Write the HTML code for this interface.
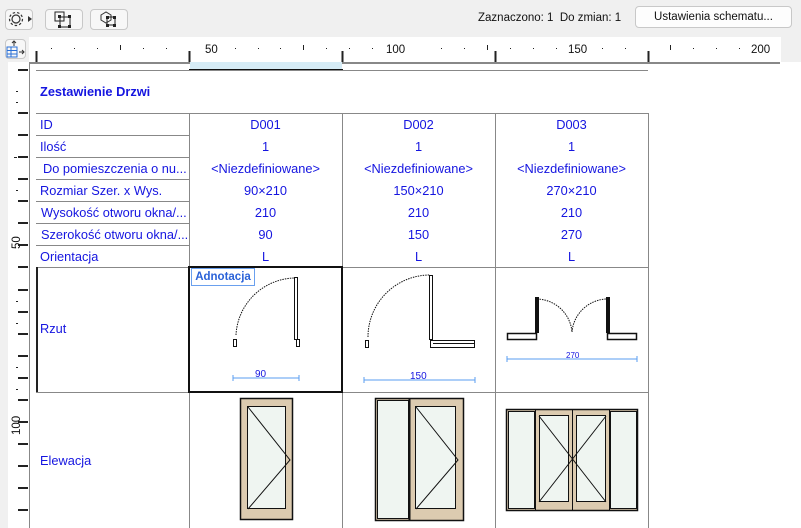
<!DOCTYPE html>
<html><head><meta charset="utf-8"><style>
body{margin:0;width:801px;height:528px;overflow:hidden;background:#f0f0f0;font-family:"Liberation Sans",sans-serif;position:relative}
.btn{position:absolute;top:9px;height:21px;border:1px solid #c8c8c8;border-radius:4px;background:#f7f7f7;box-sizing:border-box}
.t{position:absolute;color:#1515e0;font-size:12.8px;white-space:nowrap}
.c{text-align:center;width:153px}
.hl{position:absolute;background:#888;height:1px}
.vl{position:absolute;background:#888;width:1px}
</style></head><body>
<div class="btn" style="left:5px;width:28px"></div>
<svg style="position:absolute;left:7px;top:11px" width="26" height="18"><circle cx="9" cy="8" r="4" fill="none" stroke="#333" stroke-width="1.2"/><circle cx="9" cy="8" r="6.5" fill="none" stroke="#333" stroke-width="1.2" stroke-dasharray="2.5 2"/><path d="M21 5l4 3-4 3z" fill="#333"/></svg>
<div class="btn" style="left:45px;width:38px"></div>
<svg style="position:absolute;left:54px;top:11px" width="22" height="18"><rect x="1" y="1" width="9" height="9" fill="none" stroke="#222"/><rect x="6" y="6" width="10" height="10" fill="none" stroke="#222"/><rect x="4" y="4" width="3" height="3" fill="#222"/><rect x="14" y="14" width="3" height="3" fill="#222"/><rect x="14" y="4" width="3" height="3" fill="#222"/><rect x="4" y="14" width="3" height="3" fill="#222"/></svg>
<div class="btn" style="left:90px;width:38px"></div>
<svg style="position:absolute;left:99px;top:11px" width="22" height="18"><path d="M2 4l5-3 5 3v5l-5 3-5-3z" fill="none" stroke="#333"/><rect x="8" y="6" width="8" height="8" fill="none" stroke="#222"/><rect x="7" y="5" width="3" height="3" fill="#222"/><rect x="14" y="13" width="3" height="3" fill="#222"/><rect x="14" y="5" width="3" height="3" fill="#222"/><rect x="7" y="13" width="3" height="3" fill="#222"/></svg>
<div style="position:absolute;left:478px;top:12px;font-size:11.5px;color:#111">Zaznaczono: 1&nbsp; Do zmian: 1</div>
<div class="btn" style="left:635px;top:6px;width:157px;height:22px;background:#fdfdfd;font-size:11.5px;text-align:center;line-height:20px;color:#111">Ustawienia schematu...</div>
<div class="btn" style="left:5px;top:39px;width:21px;height:20px"></div>
<svg style="position:absolute;left:6px;top:40px" width="20" height="18"><path d="M8 1v5M6 3l2-2 2 2" stroke="#333" fill="none"/><rect x="1" y="7" width="10" height="10" fill="none" stroke="#2a6fd6"/><path d="M1 10.5h10M1 14h10M5 7v10" stroke="#2a6fd6"/><path d="M13 12h5M16 10l2 2-2 2" stroke="#333" fill="none"/></svg>
<div style="position:absolute;left:29px;top:37px;width:752px;height:25px;background:#fff"></div>
<svg style="position:absolute;left:0;top:37px" width="801" height="26" font-family="Liberation Sans" font-size="11.5" fill="#111">
<g stroke="#222" stroke-width="1">
<path d="M36.5 14v11M189.5 14v11M342.5 14v11M495.5 14v11M648.5 14v11" stroke-width="2"/>
<path d="M120.5 8v5M303.5 8v5M487.5 8v5M670.5 8v5"/>
</g>
<g fill="#222">
<rect x="51" y="11" width="1" height="1"/><rect x="74" y="11" width="1" height="1"/><rect x="97" y="11" width="1" height="1"/><rect x="143" y="11" width="1" height="1"/><rect x="166" y="11" width="1" height="1"/>
<rect x="235" y="11" width="1" height="1"/><rect x="258" y="11" width="1" height="1"/><rect x="280" y="11" width="1" height="1"/><rect x="326" y="11" width="1" height="1"/>
<rect x="349" y="11" width="1" height="1"/><rect x="372" y="11" width="1" height="1"/><rect x="441" y="11" width="1" height="1"/><rect x="464" y="11" width="1" height="1"/><rect x="510" y="11" width="1" height="1"/><rect x="533" y="11" width="1" height="1"/><rect x="556" y="11" width="1" height="1"/><rect x="602" y="11" width="1" height="1"/><rect x="625" y="11" width="1" height="1"/><rect x="693" y="11" width="1" height="1"/><rect x="716" y="11" width="1" height="1"/><rect x="739" y="11" width="1" height="1"/>
</g>
<text x="205" y="16">50</text><text x="386" y="16">100</text><text x="568" y="16">150</text><text x="751" y="16">200</text>
</svg>
<div style="position:absolute;left:8px;top:62px;width:21px;height:466px;background:#fff"></div>
<svg style="position:absolute;left:0;top:62px" width="30" height="466" font-family="Liberation Sans" font-size="11.5" fill="#111">
<g stroke="#222" stroke-width="2">
<path d="M18 8h10M18 51h10M18 73h10M18 95h10M18 117h10M18 139h10M18 161h10M18 183h10M18 205h10M18 228h10M18 250h10M18 272h10M18 294h10M18 316h10M18 338h10M18 360h10M18 382h10M18 404h10M18 426h10M18 448h10"/>
</g>
<g fill="#222"><rect x="16" y="29" width="2" height="1"/><rect x="16" y="40" width="2" height="1"/><rect x="14" y="95" width="3" height="1"/><rect x="16" y="128" width="2" height="1"/><rect x="16" y="239" width="2" height="1"/><rect x="16" y="261" width="2" height="1"/><rect x="16" y="305" width="2" height="1"/><rect x="16" y="327" width="2" height="1"/></g>
<text transform="translate(20,187) rotate(-90)">50</text>
<text transform="translate(20,373) rotate(-90)">100</text>
</svg>
<div style="position:absolute;left:29px;top:62px;width:751px;height:466px;background:#fff;border-left:1px solid #888;border-top:2px solid #888;box-sizing:border-box"></div>
<div style="position:absolute;left:780px;top:62px;width:21px;height:466px;background:#fff"></div>
<div style="position:absolute;left:190px;top:62px;width:152px;height:8px;background:#d6ecf6"></div>
<div style="position:absolute;left:189px;top:69px;width:154px;height:2px;background:#111"></div>
<div class="hl" style="left:36px;top:70px;width:612px"></div>
<div class="t" style="left:40px;top:84px;font-weight:bold;font-size:12.8px">Zestawienie Drzwi</div>
<div class="hl" style="left:36px;top:113px;width:612px"></div>
<div class="hl" style="left:36px;top:135px;width:153px"></div>
<div class="hl" style="left:36px;top:157px;width:153px"></div>
<div class="hl" style="left:36px;top:179px;width:153px"></div>
<div class="hl" style="left:36px;top:201px;width:153px"></div>
<div class="hl" style="left:36px;top:223px;width:153px"></div>
<div class="hl" style="left:36px;top:245px;width:153px"></div>
<div class="hl" style="left:36px;top:267px;width:612px"></div>
<div class="hl" style="left:36px;top:392px;width:612px"></div>
<div class="vl" style="left:189px;top:113px;height:415px"></div>
<div class="vl" style="left:342px;top:113px;height:415px"></div>
<div class="vl" style="left:495px;top:113px;height:415px"></div>
<div class="vl" style="left:648px;top:113px;height:415px"></div>
<div style="position:absolute;left:36px;top:267px;width:2px;height:125px;background:#222"></div>
<div style="position:absolute;left:188px;top:266px;width:155px;height:127px;border:2px solid #111;box-sizing:border-box"></div>
<div class="t" style="left:40px;top:117px">ID</div>
<div class="t" style="left:40px;top:139px">Ilość</div>
<div class="t" style="left:43px;top:161px">Do pomieszczenia o nu...</div>
<div class="t" style="left:40px;top:183px">Rozmiar Szer. x Wys.</div>
<div class="t" style="left:41px;top:205px">Wysokość otworu okna/...</div>
<div class="t" style="left:41px;top:227px">Szerokość otworu okna/...</div>
<div class="t" style="left:40px;top:249px">Orientacja</div>
<div class="t" style="left:40px;top:321px">Rzut</div>
<div class="t" style="left:40px;top:453px">Elewacja</div>
<div class="t c" style="left:189px;top:117px">D001</div><div class="t c" style="left:342px;top:117px">D002</div><div class="t c" style="left:495px;top:117px">D003</div>
<div class="t c" style="left:189px;top:139px">1</div><div class="t c" style="left:342px;top:139px">1</div><div class="t c" style="left:495px;top:139px">1</div>
<div class="t c" style="left:189px;top:161px">&lt;Niezdefiniowane&gt;</div><div class="t c" style="left:342px;top:161px">&lt;Niezdefiniowane&gt;</div><div class="t c" style="left:495px;top:161px">&lt;Niezdefiniowane&gt;</div>
<div class="t c" style="left:189px;top:183px">90×210</div><div class="t c" style="left:342px;top:183px">150×210</div><div class="t c" style="left:495px;top:183px">270×210</div>
<div class="t c" style="left:189px;top:205px">210</div><div class="t c" style="left:342px;top:205px">210</div><div class="t c" style="left:495px;top:205px">210</div>
<div class="t c" style="left:189px;top:227px">90</div><div class="t c" style="left:342px;top:227px">150</div><div class="t c" style="left:495px;top:227px">270</div>
<div class="t c" style="left:189px;top:249px">L</div><div class="t c" style="left:342px;top:249px">L</div><div class="t c" style="left:495px;top:249px">L</div>
<div style="position:absolute;left:191px;top:268px;width:64px;height:18px;border:1px solid #6aa0ee;box-sizing:border-box;color:#2a62d8;font-size:11.5px;font-weight:bold;line-height:16px;text-align:center;background:#fff">Adnotacja</div>
<svg style="position:absolute;left:0;top:0" width="801" height="528" fill="none" stroke="#111" stroke-width="1">
<path d="M236 335 A60 60 0 0 1 294 278" stroke-dasharray="1.5 1"/>
<rect x="233.5" y="339.5" width="3" height="7"/><rect x="294.5" y="277.5" width="3" height="62"/><rect x="296.5" y="339.5" width="3" height="7"/>
<path d="M233 378h66M233 375v6M299 375v6" stroke="#5a9ef0"/>
<path d="M368 337 A62 62 0 0 1 430 275" stroke-dasharray="1.5 1"/>
<rect x="365.5" y="340.5" width="3" height="7"/><rect x="429.5" y="275.5" width="3" height="64"/><rect x="430.5" y="340.5" width="44" height="7"/><path d="M433 343.5h41"/>
<path d="M364 380h111M364 377v6M475 377v6" stroke="#5a9ef0"/>
<path d="M537 299 A36 36 0 0 1 572 332 A36 36 0 0 1 607 299" stroke-dasharray="1.5 1"/>
<rect x="535.5" y="297.5" width="3" height="35" fill="#111"/><rect x="606.5" y="297.5" width="3" height="35" fill="#111"/>
<rect x="507.5" y="333.5" width="29" height="6" stroke-width="1.5"/><rect x="607.5" y="333.5" width="29" height="6" stroke-width="1.5"/>
<path d="M507 359h130M507 356v6M637 356v6" stroke="#5a9ef0"/>
</svg>
<div style="position:absolute;left:255px;top:369px;font-size:10px;color:#1515e0">90</div>
<div style="position:absolute;left:410px;top:371px;font-size:10px;color:#1515e0">150</div>
<div style="position:absolute;left:566px;top:351px;font-size:8px;color:#1515e0">270</div>
<svg style="position:absolute;left:0;top:0" width="801" height="528" stroke="#111" stroke-width="1">
<rect x="240.5" y="398.5" width="52" height="121" fill="#dccbb0" stroke-width="1.5"/><rect x="247.5" y="406.5" width="38" height="102" fill="#eff5f1"/><path d="M248 407L290 460L248 509" fill="none"/>
<rect x="375.5" y="398.5" width="88" height="122" fill="#dccbb0" stroke-width="1.5"/><rect x="377.5" y="400.5" width="31" height="118" fill="#eff5f1"/><path d="M409.5 399v122" stroke-width="2"/><rect x="415.5" y="406.5" width="40" height="102" fill="#eff5f1"/><path d="M416 407L458 460L416 509" fill="none"/>
<rect x="506.5" y="409.5" width="131" height="101" fill="#dccbb0" stroke-width="1.5"/><rect x="508.5" y="411.5" width="26" height="97" fill="#eff5f1"/><rect x="610.5" y="411.5" width="26" height="97" fill="#eff5f1"/><path d="M535.5 410v101M609.5 410v101M572.5 410v101"/>
<rect x="539.5" y="415.5" width="29" height="86" fill="#eff5f1"/><rect x="576.5" y="415.5" width="29" height="86" fill="#eff5f1"/><path d="M539 416L606 502M606 416L539 502" fill="none"/>
</svg>
</body></html>
